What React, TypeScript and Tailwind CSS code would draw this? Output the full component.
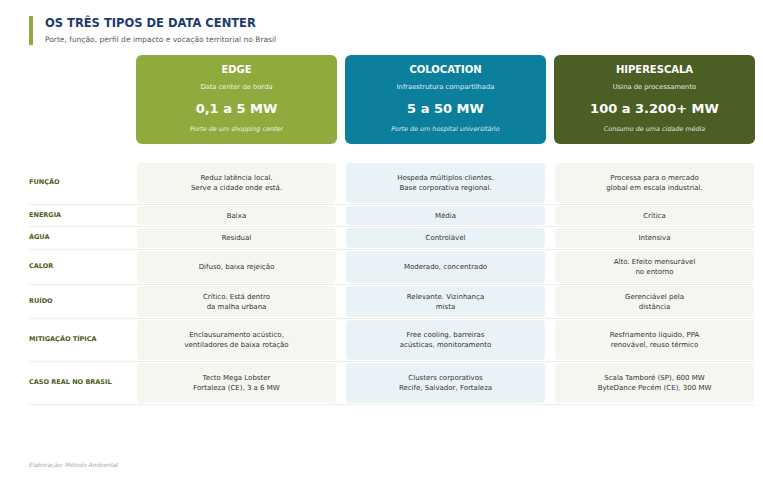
type Row = { label: string; h: string; cells: [string[], string[], string[]] }

const rows: Row[] = [
  { label: "Função", h: "h-[40px]", cells: [["Reduz latência local.", "Serve a cidade onde está."], ["Hospeda múltiplos clientes.", "Base corporativa regional."], ["Processa para o mercado", "global em escala industrial."]] },
  { label: "Energia", h: "h-[19px]", cells: [["Baixa"], ["Média"], ["Crítica"]] },
  { label: "Água", h: "h-[20px]", cells: [["Residual"], ["Controlável"], ["Intensiva"]] },
  { label: "Calor", h: "h-[32px]", cells: [["Difuso, baixa rejeição"], ["Moderado, concentrado"], ["Alto. Efeito mensurável", "no entorno"]] },
  { label: "Ruído", h: "h-[31px]", cells: [["Crítico. Está dentro", "da malha urbana"], ["Relevante. Vizinhança", "mista"], ["Gerenciável pela", "distância"]] },
  { label: "Mitigação típica", h: "h-[40px]", cells: [["Enclausuramento acústico,", "ventiladores de baixa rotação"], ["Free cooling, barreiras", "acústicas, monitoramento"], ["Resfriamento líquido, PPA", "renovável, reuso térmico"]] },
  { label: "Caso real no Brasil", h: "h-[40px]", cells: [["Tecto Mega Lobster", "Fortaleza (CE), 3 a 6 MW"], ["Clusters corporativos", "Recife, Salvador, Fortaleza"], ["Scala Tamboré (SP), 600 MW", "ByteDance Pecém (CE), 300 MW"]] },
]

const types = [
  { name: "EDGE", sub: "Data center de borda", power: "0,1 a 5 MW", note: "Porte de um shopping center", bg: "bg-[#8fab3d]" },
  { name: "COLOCATION", sub: "Infraestrutura compartilhada", power: "5 a 50 MW", note: "Porte de um hospital universitário", bg: "bg-[#0b7f9b]" },
  { name: "HIPERESCALA", sub: "Usina de processamento", power: "100 a 3.200+ MW", note: "Consumo de uma cidade média", bg: "bg-[#4b5e23]" },
]

const cellBg = ["bg-[#f6f6f0]", "bg-[#e9f3f7]", "bg-[#f6f6f0]"]

export default function App() {
  return (
    <div className="w-[763px] h-[493px] bg-white overflow-hidden pl-[29px] pt-4 font-['DejaVu_Sans',sans-serif]">

      {/* Header */}
      <div className="flex items-stretch gap-[12px]">
        <div className="w-1 bg-[#8fab3d]" />
        <div>
          <div className="text-[11.5px] leading-[15px] font-bold text-[#1e3a6e]">OS TRÊS TIPOS DE DATA CENTER</div>
          <div className="mt-[3px] text-[7.5px] leading-[11px] text-[#5a5a5a]">
            Porte, função, perfil de impacto e vocação territorial no Brasil
          </div>
        </div>
      </div>

      {/* Type cards */}
      <div className="mt-[10px] grid grid-cols-[99px_201px_201px_201px] gap-x-2">
        <div />
        {types.map(t => (
          <div key={t.name} className={`${t.bg} h-[89px] rounded-md pt-[9px] flex flex-col items-center text-white`}>
            <div className="text-[10px] leading-[12px] font-bold">{t.name}</div>
            <div className="mt-[7px] text-[6.75px] leading-[9px] text-white/85">{t.sub}</div>
            <div className="mt-[9px] text-[13px] leading-[16px] font-bold">{t.power}</div>
            <div className="mt-[8px] text-[6.4px] leading-[8px] italic text-white/80">{t.note}</div>
          </div>
        ))}
      </div>

      {/* Comparison rows */}
      <div className="mt-[18px] w-[726px]">
        {rows.map(r => (
          <div key={r.label} className="grid grid-cols-[99px_201px_201px_201px] gap-x-2 pt-px pb-px border-b border-[#ededea]">
            <div className="flex items-center text-[6.5px] font-bold uppercase text-[#4b5e23]">{r.label}</div>
            {r.cells.map((lines, i) => (
              <div key={i} className={`${r.h} ${cellBg[i]} mx-px rounded-[4px] flex flex-col items-center justify-center text-[7px] leading-[10px] text-[#333333] text-center`}>
                {lines.map(l => <span key={l}>{l}</span>)}
              </div>
            ))}
          </div>
        ))}
      </div>

      {/* Footer */}
      <div className="mt-[56px] text-[5.8px] leading-[8px] italic text-[#a8a8a8]">Elaboração: Método Ambiental</div>
    </div>
  )
}
